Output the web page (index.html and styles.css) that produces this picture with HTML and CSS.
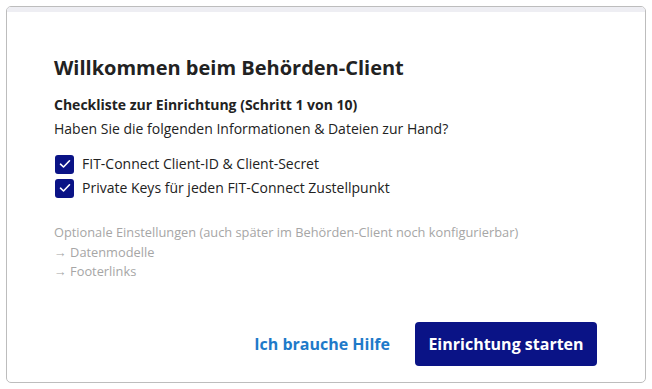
FILE: index.html
```html
<!DOCTYPE html>
<html lang="de">
<head>
<meta charset="UTF-8">
<title>Behörden-Client Einrichtung</title>
<link rel="stylesheet" href="styles.css">
</head>
<body>
<div class="dialog">
    <div class="dialog-top"></div>
    <div class="dialog-body">
        <h1>Willkommen beim Behörden-Client</h1>
        <p class="step">Checkliste zur Einrichtung (Schritt 1 von 10)</p>
        <p class="intro">Haben Sie die folgenden Informationen &amp; Dateien zur Hand?</p>
        <ul class="checks">
            <li><span class="box"><svg width="12" height="10" viewBox="0 0 12 10"><path d="M1.5 5.2 L4.5 8 L10.5 1.8" fill="none" stroke="#fff" stroke-width="1.6" stroke-linecap="round" stroke-linejoin="round"/></svg></span>FIT-Connect Client-ID &amp; Client-Secret</li>
            <li><span class="box"><svg width="12" height="10" viewBox="0 0 12 10"><path d="M1.5 5.2 L4.5 8 L10.5 1.8" fill="none" stroke="#fff" stroke-width="1.6" stroke-linecap="round" stroke-linejoin="round"/></svg></span>Private Keys für jeden FIT-Connect Zustellpunkt</li>
        </ul>
        <div class="optional">
            <p>Optionale Einstellungen (auch später im Behörden-Client noch konfigurierbar)</p>
            <p>&rarr; Datenmodelle</p>
            <p>&rarr; Footerlinks</p>
        </div>
    </div>
    <div class="dialog-actions">
        <a href="javascript:{}" class="help">Ich brauche Hilfe</a>
        <a href="javascript:{}" class="start">Einrichtung starten</a>
    </div>
</div>
</body>
</html>
```
FILE: styles.css
```css
*{margin:0;padding:0;box-sizing:border-box;}
body{margin:6px;font-family:"Open Sans","Noto Sans",sans-serif;color:#222;background:#fff;}
.dialog{width:640px;height:377px;border:1px solid #bdbdbd;border-radius:5px;overflow:hidden;display:flex;flex-direction:column;}
.dialog-top{height:5px;background:#eeeef3;}
.dialog-body{padding:42px 47px 0;flex:1;}
h1{font-size:20px;font-weight:700;line-height:28px;color:#222;}
.step{margin-top:13px;font-size:14px;font-weight:700;line-height:20px;}
.intro{margin-top:4px;font-size:14px;line-height:20px;}
.checks{list-style:none;margin-top:13px;}
.checks li{display:flex;align-items:center;font-size:14px;line-height:20px;height:24px;}
.box{width:19px;height:19px;border-radius:3px;background:#0a1386;display:flex;align-items:center;justify-content:center;margin-right:8px;margin-left:1px;}
.optional{margin-top:23px;color:#a6a6a6;font-size:12.8px;line-height:19.5px;}
.dialog-actions{display:flex;justify-content:flex-end;align-items:center;padding:0 48px 16px 0;}
.help{font-size:16px;font-weight:700;color:#1e7ac9;text-decoration:none;margin-right:25px;}
.start{font-size:16px;font-weight:700;color:#fff;background:#0a1386;text-decoration:none;border-radius:4px;width:182px;height:44px;display:flex;align-items:center;justify-content:center;}
```
